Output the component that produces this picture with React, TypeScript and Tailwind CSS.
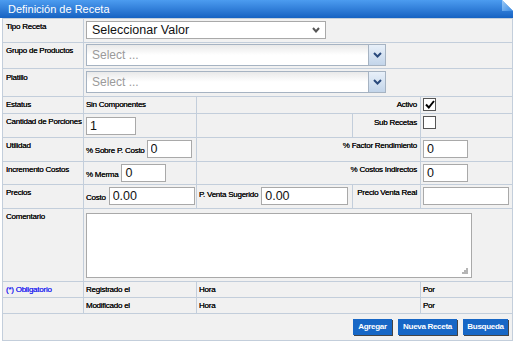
import React from "react";

const lbl = "text-[8px] leading-[10px] tracking-[-0.25px] text-[#111] [text-shadow:0_0_0.3px_#000]";
const cell = "bg-[#f1f1f1]";
const inp =
  "h-[18px] border border-[#a9a9a9] bg-white px-[3px] text-[12.5px] text-[#111] outline-none font-['Liberation_Sans',Arial,sans-serif]";

function Combo() {
  return (
    <div className="flex w-[300px] h-[22px] border border-[#a6b3c2]">
      <div className="flex-1 bg-gradient-to-b from-[#e9e9e9] via-white to-white pl-[5px] text-[12px] leading-[20px] text-[#9a9a9a]">
        Select ...
      </div>
      <div className="w-[17px] border-l border-[#a6b3c2] bg-gradient-to-b from-[#e8f0f9] to-[#c3d5ea] flex items-center justify-center">
        <svg width="9" height="6" viewBox="0 0 9 6">
          <path d="M1 1 L4.5 4.5 L8 1" stroke="#29497c" strokeWidth="2" fill="none" />
        </svg>
      </div>
    </div>
  );
}

function Check({ checked }: { checked?: boolean }) {
  return (
    <div className="w-[13px] h-[13px] border border-[#555] bg-white flex items-center justify-center">
      {checked && (
        <svg width="10" height="9" viewBox="0 0 10 9">
          <path d="M1 4.5 L3.8 7.5 L9 1" stroke="#000" strokeWidth="2" fill="none" />
        </svg>
      )}
    </div>
  );
}

export default function App() {
  return (
    <div className="w-[515px] h-[343px] bg-white font-['Liberation_Sans',Arial,sans-serif]">
      <div className="relative w-[513px] h-[18px] bg-gradient-to-b from-[#4c9cf0] to-[#1562c2] pl-[8px] text-[11px] leading-[18px] text-white">
        Definición de Receta
        <svg className="absolute right-0 top-0" width="11" height="11" viewBox="0 0 11 11">
          <defs>
            <linearGradient id="fold" x1="0" y1="0" x2="1" y2="1">
              <stop offset="0" stopColor="#9ccaf6" />
              <stop offset="1" stopColor="#3a8be4" />
            </linearGradient>
          </defs>
          <polygon points="0,0 11,0 11,11" fill="#ffffff" />
          <polygon points="0,0 11,11 0,11" fill="url(#fold)" />
        </svg>
      </div>

      <div className="ml-[2px] w-[511px] grid grid-cols-[80px_112px_155px_67px_91px] grid-rows-[23px_25px_27px_16px_23px_23px_22px_23px_72px_15px_15px_26px] gap-px bg-[#c3cedb] p-px">
        {/* Tipo Receta */}
        <div className={`${cell} pl-[3px] pt-[3px] ${lbl}`}>Tipo Receta</div>
        <div className={`${cell} col-span-4 pl-[2px] pt-[2px]`}>
          <div className="flex items-center justify-between w-[240px] h-[18px] border border-[#a9a9a9] bg-white pl-[5px] pr-[5px] text-[12.5px] text-[#111]">
            Seleccionar Valor
            <svg width="8" height="6" viewBox="0 0 8 6">
              <path d="M1 1 L4 4.5 L7 1" stroke="#555" strokeWidth="2" fill="none" />
            </svg>
          </div>
        </div>

        {/* Grupo de Productos */}
        <div className={`${cell} pl-[3px] pt-[3px] ${lbl}`}>Grupo de Productos</div>
        <div className={`${cell} col-span-4 pl-[2px] pt-[1px]`}>
          <Combo />
        </div>

        {/* Platillo */}
        <div className={`${cell} pl-[3px] pt-[4px] ${lbl}`}>Platillo</div>
        <div className={`${cell} col-span-4 pl-[2px] pt-[2px]`}>
          <Combo />
        </div>

        {/* Estatus */}
        <div className={`${cell} pl-[3px] flex items-center ${lbl}`}>Estatus</div>
        <div className={`${cell} pl-[2px] flex items-center ${lbl}`}>Sin Componentes</div>
        <div className={`${cell} col-span-2 pr-[3px] flex items-center justify-end ${lbl}`}>Activo</div>
        <div className={`${cell} pl-[2px] pt-[1px] flex items-start`}>
          <Check checked />
        </div>

        {/* Cantidad de Porciones */}
        <div className={`${cell} pl-[3px] pt-[3px] ${lbl}`}>Cantidad de Porciones</div>
        <div className={`${cell} pl-[2px] pt-[3px] flex items-start`}>
          <input readOnly value="1" className={`${inp} w-[50px]`} />
        </div>
        <div className={cell} />
        <div className={`${cell} pr-[3px] pt-[4px] flex justify-end ${lbl}`}>Sub Recetas</div>
        <div className={`${cell} pl-[2px] pt-[2px] flex items-start`}>
          <Check />
        </div>

        {/* Utilidad */}
        <div className={`${cell} pl-[3px] pt-[3px] ${lbl}`}>Utilidad</div>
        <div className={`${cell} pl-[2px] pt-[2px] flex items-baseline gap-[2px]`}>
          <span className={lbl}>% Sobre P. Costo</span>
          <input readOnly value="0" className={`${inp} w-[45px]`} />
        </div>
        <div className={`${cell} col-span-2 pr-[3px] pt-[3px] flex justify-end ${lbl}`}>% Factor Rendimiento</div>
        <div className={`${cell} pl-[2px] pt-[2px] flex items-start`}>
          <input readOnly value="0" className={`${inp} w-[45px]`} />
        </div>

        {/* Incremento Costos */}
        <div className={`${cell} pl-[3px] pt-[3px] ${lbl}`}>Incremento Costos</div>
        <div className={`${cell} pl-[2px] pt-[2px] flex items-baseline gap-[3px]`}>
          <span className={lbl}>% Merma</span>
          <input readOnly value="0" className={`${inp} w-[45px]`} />
        </div>
        <div className={`${cell} col-span-2 pr-[3px] pt-[3px] flex justify-end ${lbl}`}>% Costos Indirectos</div>
        <div className={`${cell} pl-[2px] pt-[2px] flex items-start`}>
          <input readOnly value="0" className={`${inp} w-[45px]`} />
        </div>

        {/* Precios */}
        <div className={`${cell} pl-[3px] pt-[3px] ${lbl}`}>Precios</div>
        <div className={`${cell} pl-[2px] pt-[2px] flex items-baseline gap-[3px]`}>
          <span className={lbl}>Costo</span>
          <input readOnly value="0.00" className={`${inp} w-[86px]`} />
        </div>
        <div className={`${cell} pl-[2px] pt-[2px] flex items-start gap-[3px]`}>
          <span className={`${lbl} pt-[3px]`}>P. Venta Sugerido</span>
          <input readOnly value="0.00" className={`${inp} w-[87px]`} />
        </div>
        <div className={`${cell} pr-[3px] pt-[3px] flex justify-end ${lbl}`}>Precio Venta Real</div>
        <div className={`${cell} pl-[2px] pt-[2px] flex items-start`}>
          <input readOnly value="" className={`${inp} w-[86px]`} />
        </div>

        {/* Comentario */}
        <div className={`${cell} pl-[3px] pt-[3px] ${lbl}`}>Comentario</div>
        <div className={`${cell} col-span-4 pl-[2px] pt-[4px]`}>
          <div className="relative w-[386px] h-[65px] border border-[#a9a9a9] bg-white">
            <svg className="absolute right-[3px] bottom-[3px]" width="7" height="7" viewBox="0 0 7 7">
              <rect x="5" y="1" width="2" height="2" fill="#b5b5b5" />
              <rect x="3" y="3" width="2" height="2" fill="#b5b5b5" />
              <rect x="5" y="3" width="2" height="2" fill="#b5b5b5" />
              <rect x="1" y="5" width="2" height="2" fill="#b5b5b5" />
              <rect x="3" y="5" width="2" height="2" fill="#b5b5b5" />
              <rect x="5" y="5" width="2" height="2" fill="#b5b5b5" />
            </svg>
          </div>
        </div>

        {/* Registrado */}
        <div className={`${cell} pl-[3px] flex items-center text-[8px] leading-[10px] tracking-[-0.25px] text-[#2b2bf0] [text-shadow:0_0_0.3px_#2b2bf0]`}>(*) Obligatorio</div>
        <div className={`${cell} pl-[2px] flex items-center ${lbl}`}>Registrado el</div>
        <div className={`${cell} col-span-2 pl-[2px] flex items-center ${lbl}`}>Hora</div>
        <div className={`${cell} pl-[2px] flex items-center ${lbl}`}>Por</div>

        {/* Modificado */}
        <div className={cell} />
        <div className={`${cell} pl-[2px] flex items-center ${lbl}`}>Modificado el</div>
        <div className={`${cell} col-span-2 pl-[2px] flex items-center ${lbl}`}>Hora</div>
        <div className={`${cell} pl-[2px] flex items-center ${lbl}`}>Por</div>

        {/* Botones */}
        <div className={`${cell} col-span-5 flex justify-end items-start gap-[6px] pr-[4px] pt-[5px]`}>
          <button className="w-[39px] h-[16px] bg-[#1767c6] text-white font-bold text-[8px] tracking-[-0.3px] shadow-[1px_1px_0_#444]">
            Agregar
          </button>
          <button className="w-[59px] h-[16px] bg-[#1767c6] text-white font-bold text-[8px] tracking-[-0.3px] shadow-[1px_1px_0_#444]">
            Nueva Receta
          </button>
          <button className="w-[45px] h-[16px] bg-[#1767c6] text-white font-bold text-[8px] tracking-[-0.3px] shadow-[1px_1px_0_#444]">
            Busqueda
          </button>
        </div>
      </div>
    </div>
  );
}
